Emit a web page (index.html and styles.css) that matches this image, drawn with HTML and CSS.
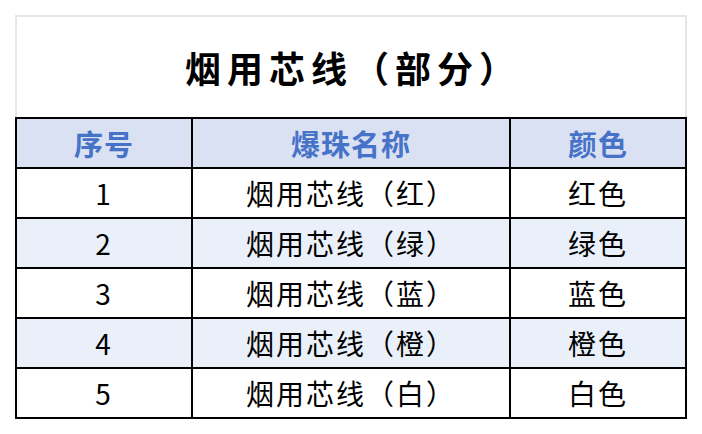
FILE: index.html
```html
<!DOCTYPE html>
<html lang="zh">
<head>
<meta charset="utf-8">
<link rel="stylesheet" href="styles.css">
</head>
<body>
<div class="sheet">
  <div class="title">烟用芯线（部分）</div>
  <div class="grid">
    <div class="cell head">序号</div>
    <div class="cell head">爆珠名称</div>
    <div class="cell head">颜色</div>

    <div class="cell">1</div>
    <div class="cell">烟用芯线（红）</div>
    <div class="cell">红色</div>

    <div class="cell alt">2</div>
    <div class="cell alt">烟用芯线（绿）</div>
    <div class="cell alt">绿色</div>

    <div class="cell">3</div>
    <div class="cell">烟用芯线（蓝）</div>
    <div class="cell">蓝色</div>

    <div class="cell alt">4</div>
    <div class="cell alt">烟用芯线（橙）</div>
    <div class="cell alt">橙色</div>

    <div class="cell">5</div>
    <div class="cell">烟用芯线（白）</div>
    <div class="cell">白色</div>
  </div>
</div>
</body>
</html>
```

FILE: styles.css
```css
html, body {
  margin: 0;
  padding: 0;
  background: #ffffff;
}

body {
  font-family: "Noto Sans CJK SC", "Noto Sans", sans-serif;
  color: #000000;
}

.sheet {
  width: 672px;
  margin: 15px 0 0 15px;
}

.title {
  box-sizing: border-box;
  height: 102px;
  border: 2px solid #e6e6e6;
  border-bottom: none;
  display: flex;
  align-items: center;
  justify-content: center;
  font-size: 36px;
  font-weight: bold;
  letter-spacing: 6px;
  padding-left: 4px;
  padding-top: 0;
}

.grid {
  display: grid;
  grid-template-columns: 174px 316px 174px;
  grid-auto-rows: 48px;
  gap: 2px;
  padding: 2px;
  background: #000000;
}

.cell {
  background: #ffffff;
  display: flex;
  align-items: center;
  justify-content: center;
  font-size: 28px;
  letter-spacing: 2px;
  padding-left: 0;
}

.cell.head {
  background: #d9e1f2;
  color: #4672c8;
  font-weight: bold;
  font-size: 29px;
  letter-spacing: 1px;
  padding-left: 0;
}

.cell.alt {
  background: #eaf0fa;
}
```
